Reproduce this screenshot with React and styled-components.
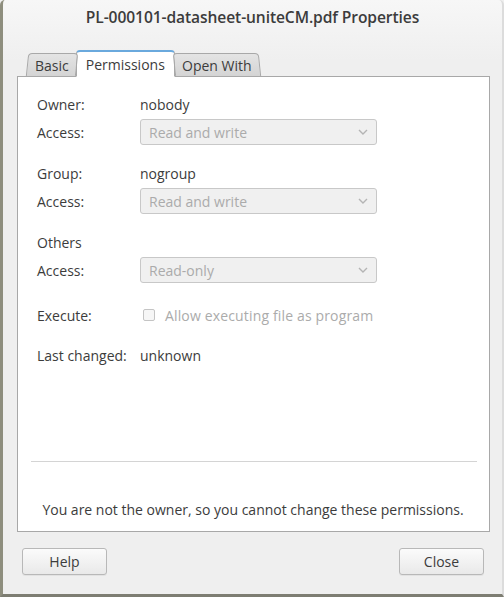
import React from "react";
import styled, { createGlobalStyle } from "styled-components";

const Global = createGlobalStyle`
  html, body {
    margin: 0;
    padding: 0;
    background: #efefef;
  }
  body {
    font-family: "Open Sans", "Noto Sans", sans-serif;
    font-size: 14px;
    color: #3c3c3c;
  }
`;

const Window = styled.div`
  box-sizing: border-box;
  width: 504px;
  height: 597px;
  display: flex;
  flex-direction: column;
  background: linear-gradient(#f7f7f7, #efefef 60px);
  border-left: 3px solid #8e8e7e;
  border-right: 2px solid #dcdcdc;
  border-bottom: 3px solid #7d7d72;
  border-radius: 5px 5px 0 0;
  overflow: hidden;
`;

const Title = styled.div`
  flex: 0 0 34px;
  display: flex;
  align-items: center;
  justify-content: center;
  font-weight: 600;
  font-size: 15.6px;
  color: #3c3c3c;
  letter-spacing: -0.1px;
`;

const Notebook = styled.div`
  flex: 0 0 auto;
  display: flex;
  flex-direction: column;
  padding: 17px 12px 0 14px;
`;

const TabBar = styled.div`
  display: flex;
  align-items: flex-end;
  padding-left: 10px;
  height: 26px;
  position: relative;
  z-index: 1;
  margin-bottom: -1px;
`;

const Tab = styled.div`
  box-sizing: border-box;
  height: ${(p) => (p.$active ? "27px" : "24px")};
  padding: 0 ${(p) => (p.$active ? "9px" : "7px")};
  display: flex;
  align-items: center;
  border: 1px solid #a8a8a8;
  border-bottom: ${(p) => (p.$active ? "1px solid #ffffff" : "1px solid #a8a8a8")};
  border-top: ${(p) => (p.$active ? "2px solid #6aa9dd" : "1px solid #a8a8a8")};
  border-radius: 4px 4px 0 0;
  background: ${(p) =>
    p.$active ? "#ffffff" : "linear-gradient(#e4e4e4, #d4d4d4)"};
  color: #3c3c3c;
  margin-left: ${(p) => (p.$first ? "0" : "-1px")};
  transform: ${(p) => (p.$first ? "skewX(-6deg)" : p.$last ? "skewX(6deg)" : "none")};
`;

const TabText = styled.span`
  transform: ${(p) => (p.$skew ? `skewX(${p.$skew}deg)` : "none")};
  padding-top: 1px;
`;

const Panel = styled.div`
  box-sizing: border-box;
  height: 456px;
  background: #ffffff;
  border: 1px solid #a8a8a8;
  display: flex;
  flex-direction: column;
  padding: 14px 12px 12px 19px;
`;

const Grid = styled.div`
  display: grid;
  grid-template-columns: 103px 237px;
  align-items: center;
`;

const Label = styled.div`
  height: 26px;
  display: flex;
  align-items: center;
  margin-top: ${(p) => p.$mt || 0}px;
`;

const Value = styled(Label)``;

const Combo = styled.div`
  box-sizing: border-box;
  width: 237px;
  height: 26px;
  border: 1px solid #c8c8c8;
  border-radius: 3px;
  background: #f0f0f0;
  display: flex;
  align-items: center;
  justify-content: space-between;
  padding: 0 8px 0 8px;
  color: #ababab;
  margin-top: ${(p) => p.$mt || 0}px;
`;

const Chevron = () => (
  <svg width="10" height="6" viewBox="0 0 10 6">
    <path d="M1 1 L5 5 L9 1" fill="none" stroke="#b4b4b4" strokeWidth="1.4" />
  </svg>
);

const CheckRow = styled.div`
  height: 26px;
  display: flex;
  align-items: center;
  gap: 10px;
  color: #ababab;
  letter-spacing: 0.15px;
  margin-top: ${(p) => p.$mt || 0}px;
`;

const Box = styled.span`
  box-sizing: border-box;
  width: 12px;
  height: 12px;
  margin-left: 3px;
  border: 1px solid #c4c4c4;
  border-radius: 2px;
  background: #f6f6f6;
`;

const Spacer = styled.div`
  flex: 1;
`;

const Separator = styled.div`
  height: 1px;
  background: #d4d4d4;
  margin: 0 0 0 -6px;
`;

const Note = styled.div`
  text-align: center;
  margin: 38px 0 0 -8px;
`;

const Footer = styled.div`
  display: flex;
  justify-content: space-between;
  padding: 16px 18px 0 19px;
`;

const Button = styled.button`
  box-sizing: border-box;
  width: 85px;
  height: 27px;
  border: 1px solid #b8b8b8;
  border-radius: 3px;
  background: linear-gradient(#fbfbfb, #e9e9e9);
  font-family: inherit;
  font-size: 14px;
  color: #3c3c3c;
  box-shadow: 0 1px 0 rgba(0, 0, 0, 0.05);
`;

export default function App() {
  return (
    <>
      <Global />
      <Window>
        <Title>PL-000101-datasheet-uniteCM.pdf Properties</Title>
        <Notebook>
          <TabBar>
            <Tab $first>
              <TabText $skew={6}>Basic</TabText>
            </Tab>
            <Tab $active>
              <TabText>Permissions</TabText>
            </Tab>
            <Tab $last>
              <TabText $skew={-6}>Open With</TabText>
            </Tab>
          </TabBar>
          <Panel>
            <Grid>
              <Label>Owner:</Label>
              <Value>nobody</Value>
              <Label $mt={2}>Access:</Label>
              <Combo $mt={2}>
                Read and write
                <Chevron />
              </Combo>

              <Label $mt={15}>Group:</Label>
              <Value $mt={15}>nogroup</Value>
              <Label $mt={2}>Access:</Label>
              <Combo $mt={2}>
                Read and write
                <Chevron />
              </Combo>

              <Label $mt={15}>Others</Label>
              <div />
              <Label $mt={2}>Access:</Label>
              <Combo $mt={2}>
                Read-only
                <Chevron />
              </Combo>

              <Label $mt={19}>Execute:</Label>
              <CheckRow $mt={19}>
                <Box />
                Allow executing file as program
              </CheckRow>

              <Label $mt={14}>Last changed:</Label>
              <Value $mt={14}>unknown</Value>
            </Grid>
            <Spacer />
            <Separator />
            <Note>You are not the owner, so you cannot change these permissions.</Note>
          </Panel>
        </Notebook>
        <Footer>
          <Button>Help</Button>
          <Button>Close</Button>
        </Footer>
      </Window>
    </>
  );
}
